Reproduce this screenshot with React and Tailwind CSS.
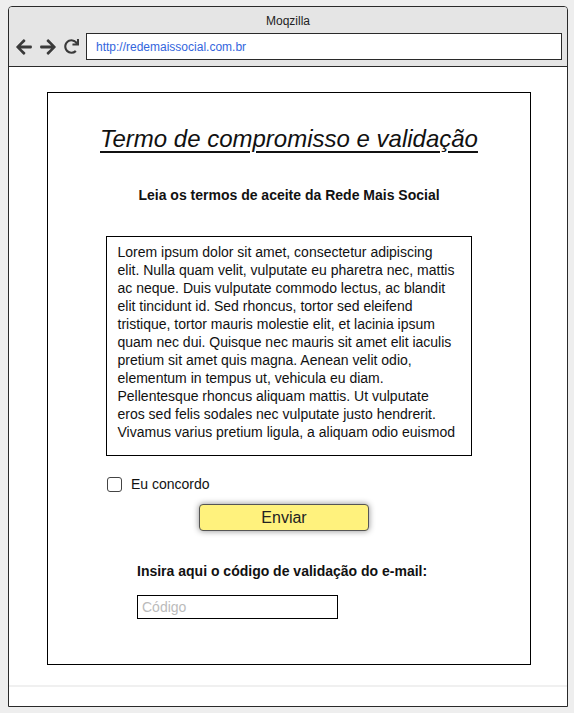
import { FaArrowLeft, FaArrowRight, FaRedo } from 'react-icons/fa'

const LOREM_LINES = [
  'Lorem ipsum dolor sit amet, consectetur adipiscing',
  'elit. Nulla quam velit, vulputate eu pharetra nec, mattis',
  'ac neque. Duis vulputate commodo lectus, ac blandit',
  'elit tincidunt id. Sed rhoncus, tortor sed eleifend',
  'tristique, tortor mauris molestie elit, et lacinia ipsum',
  'quam nec dui. Quisque nec mauris sit amet elit iaculis',
  'pretium sit amet quis magna. Aenean velit odio,',
  'elementum in tempus ut, vehicula eu diam.',
  'Pellentesque rhoncus aliquam mattis. Ut vulputate',
  'eros sed felis sodales nec vulputate justo hendrerit.',
  'Vivamus varius pretium ligula, a aliquam odio euismod',
]

export default function App() {
  return (
    <div className="w-[574px] h-[713px] bg-[#eeeeee] pt-[6px] font-['Liberation_Sans',Arial,sans-serif] text-[#111]">
      {/* browser window */}
      <div className="ml-[8px] w-[560px] h-[701px] border border-[#2a2a2a] rounded-t-[4px] bg-white flex flex-col overflow-hidden">
        {/* chrome */}
        <div className="h-[60px] bg-[#e5e5e5] border-b border-[#2a2a2a] flex flex-col">
          <div className="h-[26px] flex items-center justify-center text-[12px] text-[#222] pt-[1px]">Moqzilla</div>
          <div className="flex items-center pl-[6px] pr-[5px]">
            <div className="flex items-center gap-[6px] text-[#3a3a3a]">
              <FaArrowLeft size={18} />
              <FaArrowRight size={18} />
              <FaRedo size={15} className="ml-[1px]" />
            </div>
            <div className="ml-[7px] flex-1 h-[27px] bg-white border border-[#2a2a2a] flex items-center pl-[9px] text-[12px] text-[#3366dd]">
              http://redemaissocial.com.br
            </div>
          </div>
        </div>

        {/* page */}
        <div className="flex-1 flex flex-col">
          <div className="pt-[25px] pl-[38px]">
            <div className="w-[484px] h-[573px] border border-black flex flex-col items-center pt-[32px]">
              <h1 className="text-[24px] leading-[28px] italic underline underline-offset-[4px] decoration-[2px] text-[#111]">
                Termo de compromisso e validação
              </h1>
              <p className="mt-[34px] text-[14px] leading-[16px] font-bold">
                Leia os termos de aceite da Rede Mais Social
              </p>
              <div className="mt-[33px] ml-[-1px] w-[366px] h-[220px] border border-black pl-[11px] pt-[6px] text-[14px] leading-[18px] text-[#111]">
                {LOREM_LINES.map((line) => (
                  <div key={line} className="whitespace-nowrap">{line}</div>
                ))}
              </div>
              <div className="self-start ml-[59px] mt-[20px] flex items-center">
                <span className="w-[15px] h-[15px] border-[1.5px] border-[#444] rounded-[3px] bg-white" />
                <span className="ml-[9px] text-[14px] leading-[16px]">Eu concordo</span>
              </div>
              <button className="mt-[12px] ml-[-10px] w-[170px] h-[27px] bg-[#fff27d] border border-[#555] rounded-[4px] shadow-[0_0_6px_rgba(0,0,0,0.45)] text-[16px] text-[#222] flex items-center justify-center">
                Enviar
              </button>
              <div className="self-start ml-[89px] mt-[32px] text-[14px] leading-[16px] font-bold">
                Insira aqui o código de validação do e-mail:
              </div>
              <div className="self-start ml-[89px] mt-[16px] w-[201px] h-[24px] border border-black flex items-center pl-[4px] text-[14px] text-[#bbbbbb]">
                Código
              </div>
            </div>
          </div>
          <div className="mt-[20px] h-[2px] bg-[#f0f0f0]" />
        </div>
      </div>
    </div>
  )
}
